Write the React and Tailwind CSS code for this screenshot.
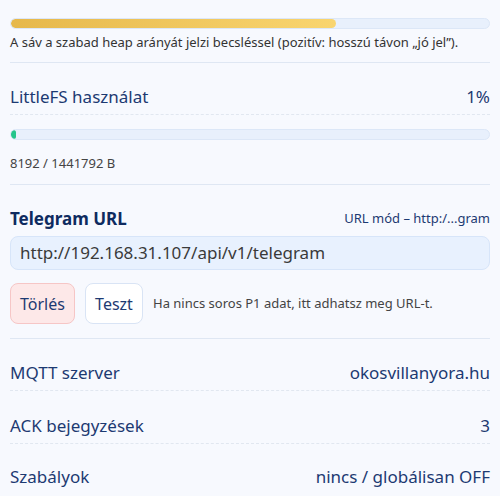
import React from "react";

const Row = ({ label, value, dashed = true }) => (
  <div className={`flex items-center justify-between h-[36px] ${dashed ? "border-b border-dashed border-[#e1e7f0]" : ""}`}>
    <span className="text-[17px] text-[#1d3a72]">{label}</span>
    <span className="text-[17px] text-[#1d3a72]">{value}</span>
  </div>
);

const App = () => {
  return (
    <div className="w-[500px] h-[500px] bg-white overflow-hidden" style={{ fontFamily: '"Noto Sans", sans-serif' }}>
      <div className="bg-[#f7f9fe] h-[496px] px-[10px]">
        {/* heap */}
        <div className="pt-[18px] pb-[11px] border-b border-[#dfe7f3]">
          <div className="h-[11px] rounded-full bg-[#e8f0fc] border border-[#dce7f7] overflow-hidden">
            <div className="h-full rounded-full bg-gradient-to-r from-[#e6b84b] to-[#f9d56f]" style={{ width: "68%" }} />
          </div>
          <p className="mt-[4px] text-[13px] leading-[18px] text-[#333]">
            A sáv a szabad heap arányát jelzi becsléssel (pozitív: hosszú távon „jó jel”).
          </p>
        </div>

        {/* littlefs */}
        <div className="pt-[17px] pb-[13px] border-b border-[#dfe7f3]">
          <div className="flex items-center justify-between h-[35px] border-b border-dashed border-[#e1e7f0]">
            <span className="text-[17px] text-[#1d3a72]">LittleFS használat</span>
            <span className="text-[17px] text-[#1d3a72]">1%</span>
          </div>
          <div className="mt-[14px] h-[11px] rounded-full bg-[#e8f0fc] border border-[#dce7f7] overflow-hidden">
            <div className="h-full rounded-full bg-[#22c58b]" style={{ width: "1%" }} />
          </div>
          <p className="mt-[15px] text-[13px] leading-[16px] text-[#444]">8192 / 1441792 B</p>
        </div>

        {/* telegram */}
        <div className="pt-[22px] pb-[14px] border-b border-[#dfe7f3]">
          <div className="flex items-center justify-between h-[24px]">
            <span className="text-[17px] font-bold text-[#0e2b60]">Telegram URL</span>
            <span className="text-[13px] text-[#1d3a72]">URL mód – http:/...gram</span>
          </div>
          <div className="mt-[5px] h-[34px] rounded-lg bg-[#e8f1fe] border border-[#d7e5f9] flex items-center px-[9px]">
            <span className="text-[17px] text-[#3a3a3a]">http://192.168.31.107/api/v1/telegram</span>
          </div>
          <div className="mt-[13px] flex items-center gap-[10px]">
            <button className="h-[41px] w-[65px] rounded-lg bg-[#fde8e8] border border-[#f6c6c6] text-[16px] text-[#1d3a72]">Törlés</button>
            <button className="h-[41px] w-[58px] rounded-lg bg-white border border-[#d9e4f5] text-[16px] text-[#1d3a72]">Teszt</button>
            <span className="text-[13px] text-[#444]">Ha nincs soros P1 adat, itt adhatsz meg URL-t.</span>
          </div>
        </div>

        {/* rows */}
        <div className="pt-[16px]">
          <Row label="MQTT szerver" value="okosvillanyora.hu" />
          <div className="pt-[17px]">
            <Row label="ACK bejegyzések" value="3" />
          </div>
          <div className="pt-[15px]">
            <Row label="Szabályok" value="nincs / globálisan OFF" dashed={false} />
          </div>
        </div>
      </div>
    </div>
  );
};

export default App;
